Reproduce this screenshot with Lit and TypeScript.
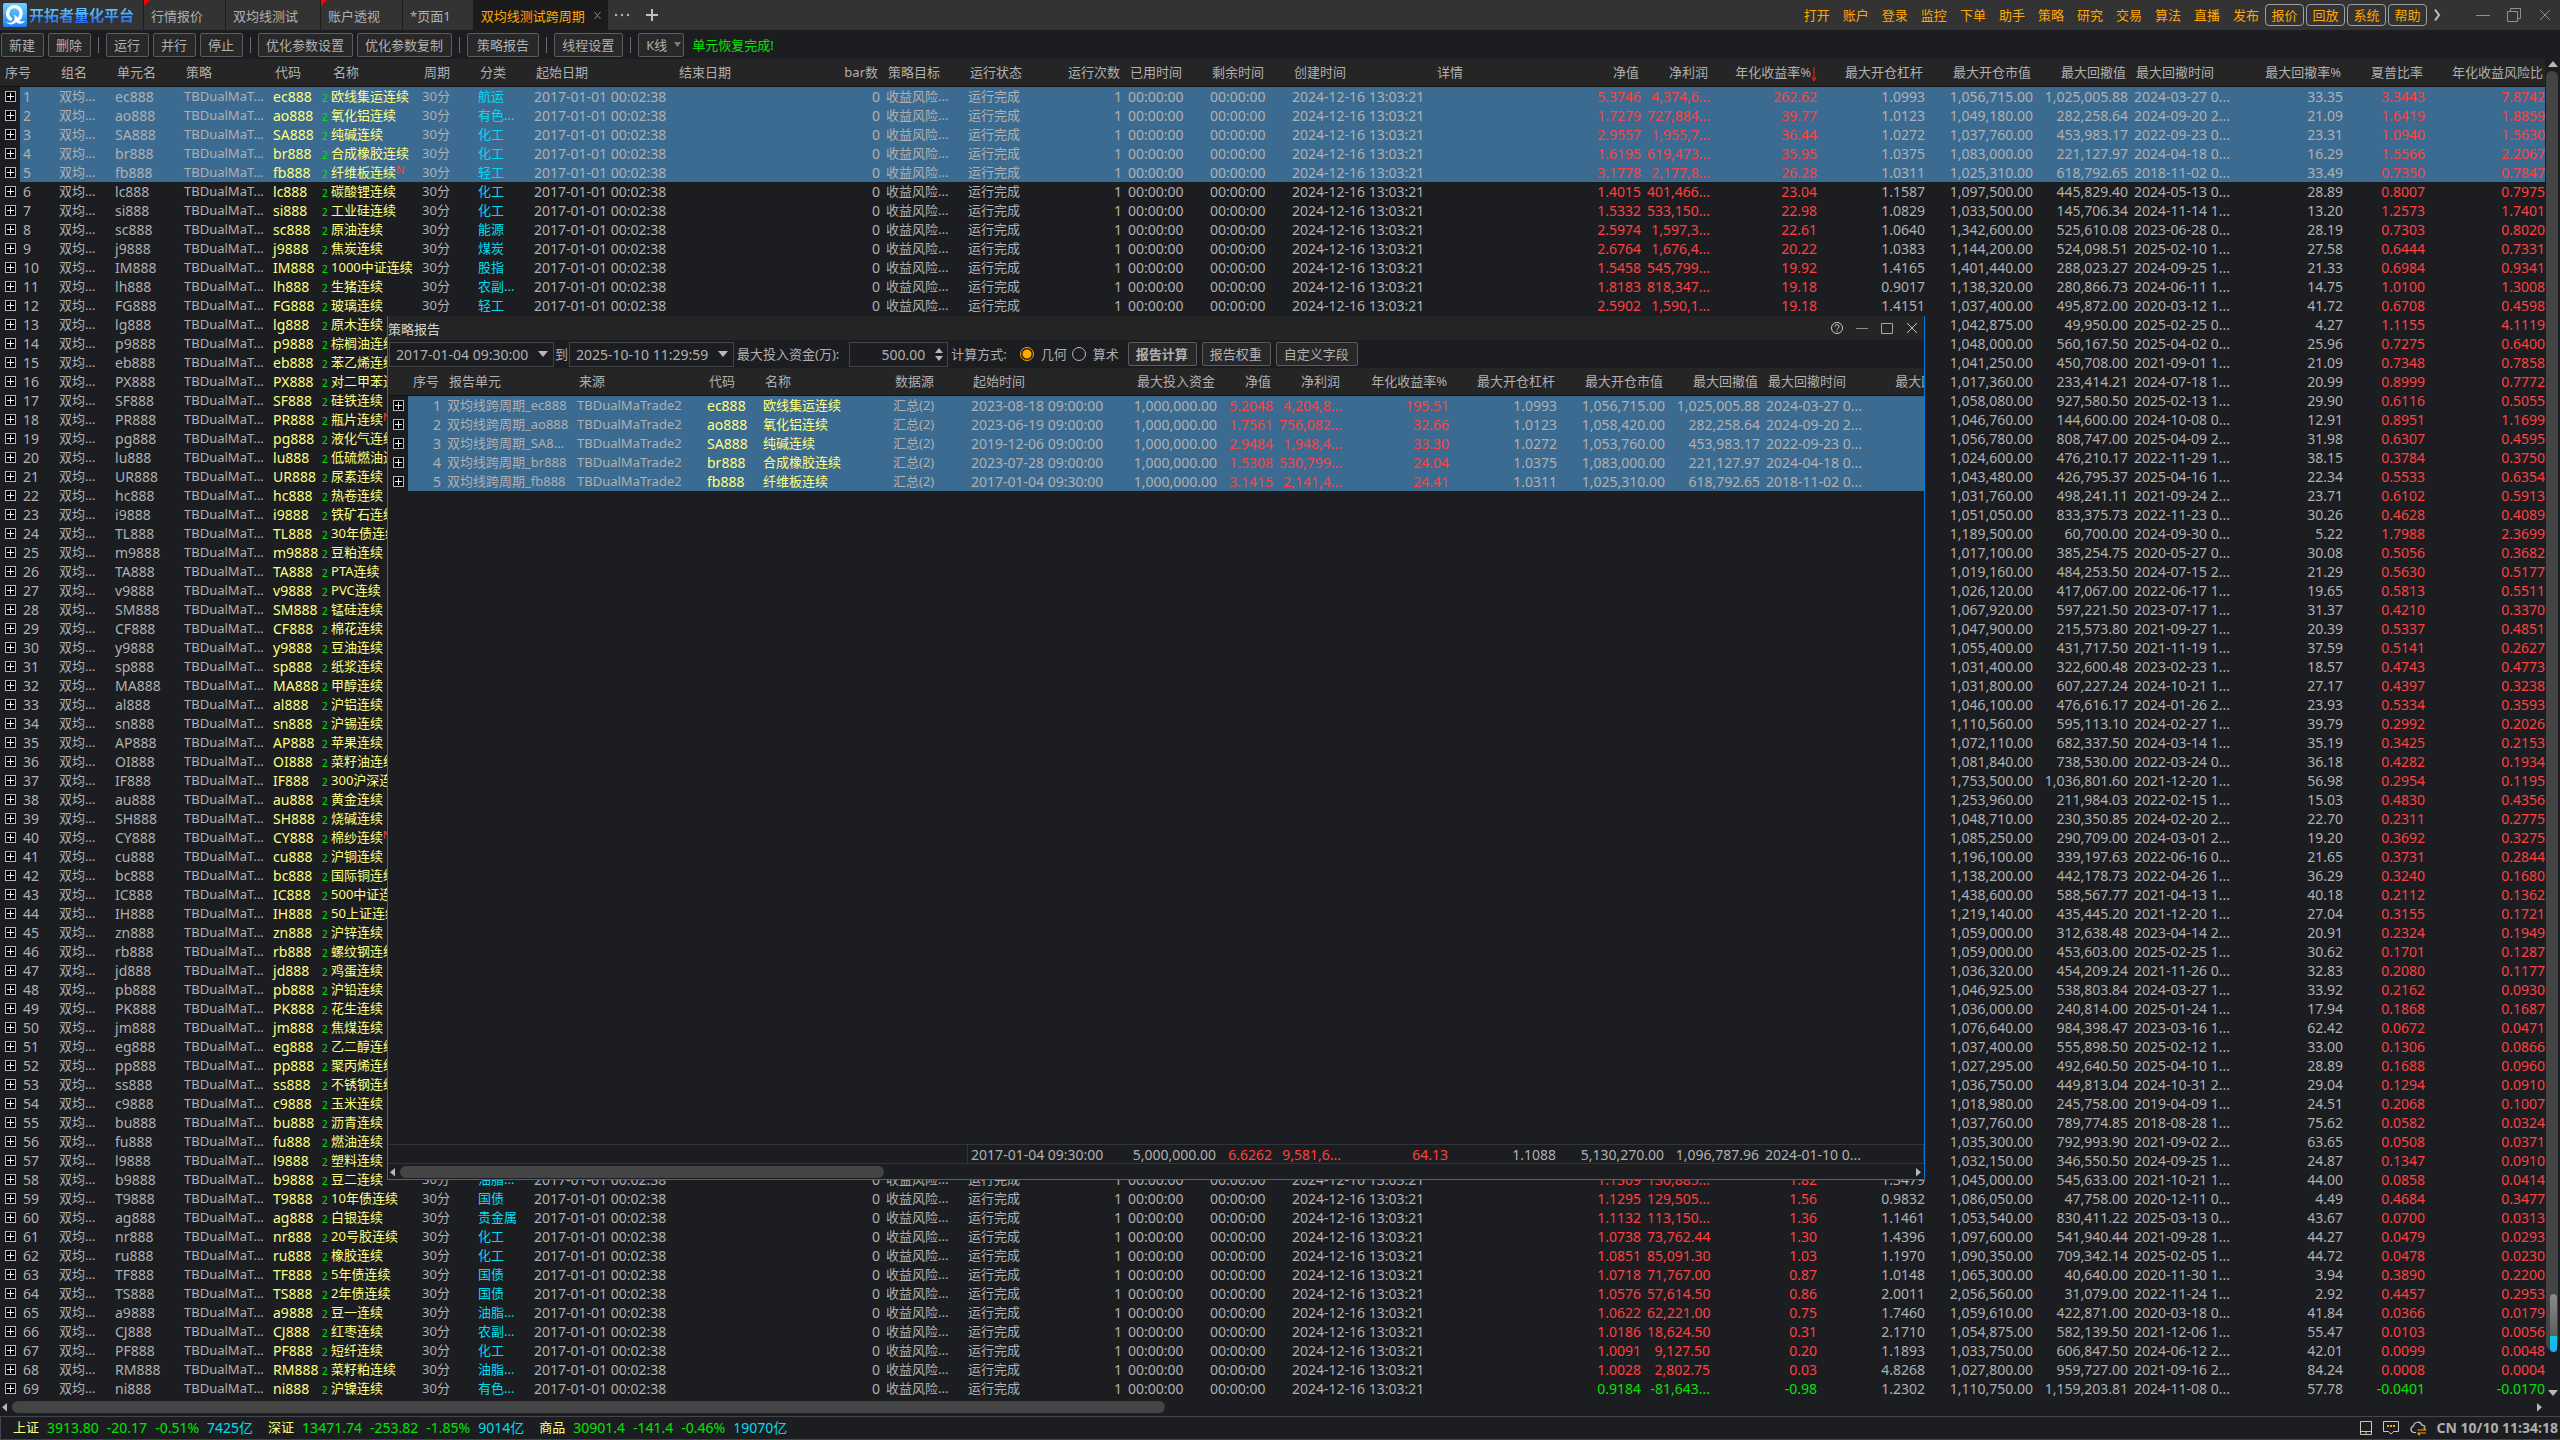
import { LitElement, html, css, svg, nothing } from "lit";
import { customElement, property } from "lit/decorators.js";
import { classMap } from "lit/directives/class-map.js";

interface Column {
  label: string;
  width?: number;
  align?: "right";
  sorted?: boolean;
  span?: number;
}

interface Unit {
  code: string;
  name: string;
  maxValue: string;
  drawdown: string;
  drawdownTime: string;
  drawdownRate: string;
  sharpe: string;
  ratio: string;
  sector?: string;
  nav?: string;
  profit?: string;
  annual?: string;
  leverage?: string;
}

const UNIT_COLUMNS: Column[] = [
  { label: "序号", width: 20, span: 2 },
  { label: "", width: 36, span: 0 },
  { label: "组名", width: 56 },
  { label: "单元名", width: 69 },
  { label: "策略", width: 89 },
  { label: "代码", width: 50 },
  { label: "", width: 8 },
  { label: "名称", width: 91 },
  { label: "周期", width: 56 },
  { label: "分类", width: 56 },
  { label: "起始日期", width: 143 },
  { label: "结束日期", width: 143 },
  { label: "bar数", width: 66, align: "right" },
  { label: "策略目标", width: 82 },
  { label: "运行状态", width: 91 },
  { label: "运行次数", width: 69, align: "right" },
  { label: "已用时间", width: 82 },
  { label: "剩余时间", width: 82 },
  { label: "创建时间", width: 143 },
  { label: "详情" },
  { label: "净值", width: 69, align: "right" },
  { label: "净利润", width: 69, align: "right" },
  { label: "年化收益率%", width: 107, align: "right", sorted: true },
  { label: "最大开仓杠杆", width: 108, align: "right" },
  { label: "最大开仓市值", width: 108, align: "right" },
  { label: "最大回撤值", width: 95, align: "right" },
  { label: "最大回撤时间", width: 109 },
  { label: "最大回撤率%", width: 106, align: "right" },
  { label: "夏普比率", width: 82, align: "right" },
  { label: "年化收益风险比", width: 120, align: "right" },
];

const REPORT_COLUMNS: Column[] = [
  { label: "", width: 20 },
  { label: "序号", width: 36 },
  { label: "报告单元", width: 130 },
  { label: "来源", width: 130 },
  { label: "代码", width: 56 },
  { label: "名称", width: 130 },
  { label: "数据源", width: 78 },
  { label: "起始时间", width: 143 },
  { label: "最大投入资金", align: "right" },
  { label: "净值", width: 56, align: "right" },
  { label: "净利润", width: 69, align: "right" },
  { label: "年化收益率%", width: 107, align: "right" },
  { label: "最大开仓杠杆", width: 108, align: "right" },
  { label: "最大开仓市值", width: 108, align: "right" },
  { label: "最大回撤值", width: 95, align: "right" },
  { label: "最大回撤时间", width: 109 },
  { label: "最大回撤率%", width: 104, align: "right" },
];

const UNITS: Unit[] = `
ec888|欧线集运连续|1,056,715.00|1,025,005.88|2024-03-27 0...|33.35|3.3443|7.8742|航运|5.3746|4,374,6...|262.62|1.0993
ao888|氧化铝连续|1,049,180.00|282,258.64|2024-09-20 2...|21.09|1.6419|1.8859|有色...|1.7279|727,884...|39.77|1.0123
SA888|纯碱连续|1,037,760.00|453,983.17|2022-09-23 0...|23.31|1.0940|1.5630|化工|2.9557|1,955,7...|36.44|1.0272
br888|合成橡胶连续|1,083,000.00|221,127.97|2024-04-18 0...|16.29|1.5566|2.2067|化工|1.6195|619,473...|35.95|1.0375
fb888|纤维板连续N|1,025,310.00|618,792.65|2018-11-02 0...|33.49|0.7350|0.7847|轻工|3.1778|2,177,8...|26.28|1.0311
lc888|碳酸锂连续|1,097,500.00|445,829.40|2024-05-13 0...|28.89|0.8007|0.7975|化工|1.4015|401,466...|23.04|1.1587
si888|工业硅连续|1,033,500.00|145,706.34|2024-11-14 1...|13.20|1.2573|1.7401|化工|1.5332|533,150...|22.98|1.0829
sc888|原油连续|1,342,600.00|525,610.08|2023-06-28 0...|28.19|0.7303|0.8020|能源|2.5974|1,597,3...|22.61|1.0640
j9888|焦炭连续|1,144,200.00|524,098.51|2025-02-10 1...|27.58|0.6444|0.7331|煤炭|2.6764|1,676,4...|20.22|1.0383
IM888|1000中证连续|1,401,440.00|288,023.27|2024-09-25 1...|21.33|0.6984|0.9341|股指|1.5458|545,799...|19.92|1.4165
lh888|生猪连续|1,138,320.00|280,866.73|2024-06-11 1...|14.75|1.0100|1.3008|农副...|1.8183|818,347...|19.18|0.9017
FG888|玻璃连续|1,037,400.00|495,872.00|2020-03-12 1...|41.72|0.6708|0.4598|轻工|2.5902|1,590,1...|19.18|1.4151
lg888|原木连续|1,042,875.00|49,950.00|2025-02-25 0...|4.27|1.1155|4.1119
p9888|棕榈油连续|1,048,000.00|560,167.50|2025-04-02 0...|25.96|0.7275|0.6400
eb888|苯乙烯连续|1,041,250.00|450,708.00|2021-09-01 1...|21.09|0.7348|0.7858
PX888|对二甲苯连续|1,017,360.00|233,414.21|2024-07-18 1...|20.99|0.8999|0.7772
SF888|硅铁连续|1,058,080.00|927,580.50|2025-02-13 1...|29.90|0.6116|0.5055
PR888|瓶片连续N|1,046,760.00|144,600.00|2024-10-08 0...|12.91|0.8951|1.1699
pg888|液化气连续|1,056,780.00|808,747.00|2025-04-09 2...|31.98|0.6307|0.4595
lu888|低硫燃油连续|1,024,600.00|476,210.17|2022-11-29 1...|38.15|0.3784|0.3750
UR888|尿素连续|1,043,480.00|426,795.37|2025-04-16 1...|22.34|0.5533|0.6354
hc888|热卷连续|1,031,760.00|498,241.11|2021-09-24 2...|23.71|0.6102|0.5913
i9888|铁矿石连续|1,051,050.00|833,375.73|2022-11-23 0...|30.26|0.4628|0.4089
TL888|30年债连续|1,189,500.00|60,700.00|2024-09-30 0...|5.22|1.7988|2.3699
m9888|豆粕连续|1,017,100.00|385,254.75|2020-05-27 0...|30.08|0.5056|0.3682
TA888|PTA连续|1,019,160.00|484,253.50|2024-07-15 2...|21.29|0.5630|0.5177
v9888|PVC连续|1,026,120.00|417,067.00|2022-06-17 1...|19.65|0.5813|0.5511
SM888|锰硅连续|1,067,920.00|597,221.50|2023-07-17 1...|31.37|0.4210|0.3370
CF888|棉花连续|1,047,900.00|215,573.80|2021-09-27 1...|20.39|0.5337|0.4851
y9888|豆油连续|1,055,400.00|431,717.50|2021-11-19 1...|37.59|0.5141|0.2627
sp888|纸浆连续|1,031,400.00|322,600.48|2023-02-23 1...|18.57|0.4743|0.4773
MA888|甲醇连续|1,031,800.00|607,227.24|2024-10-21 1...|27.17|0.4397|0.3238
al888|沪铝连续|1,046,100.00|476,616.17|2024-01-26 2...|23.93|0.5334|0.3593
sn888|沪锡连续|1,110,560.00|595,113.10|2024-02-27 1...|39.79|0.2992|0.2026
AP888|苹果连续|1,072,110.00|682,337.50|2024-03-14 1...|35.19|0.3425|0.2153
OI888|菜籽油连续|1,081,840.00|738,530.00|2022-03-24 0...|36.18|0.4282|0.1934
IF888|300沪深连续|1,753,500.00|1,036,801.60|2021-12-20 1...|56.98|0.2954|0.1195
au888|黄金连续|1,253,960.00|211,984.03|2022-02-15 1...|15.03|0.4830|0.4356
SH888|烧碱连续|1,048,710.00|230,350.85|2024-02-20 2...|22.70|0.2311|0.2775
CY888|棉纱连续N|1,085,250.00|290,709.00|2024-03-01 2...|19.20|0.3692|0.3275
cu888|沪铜连续|1,196,100.00|339,197.63|2022-06-16 0...|21.65|0.3731|0.2844
bc888|国际铜连续|1,138,200.00|442,178.73|2022-04-26 1...|36.29|0.3240|0.1680
IC888|500中证连续|1,438,600.00|588,567.77|2021-04-13 1...|40.18|0.2112|0.1362
IH888|50上证连续|1,219,140.00|435,445.20|2021-12-20 1...|27.04|0.3155|0.1721
zn888|沪锌连续|1,059,000.00|312,638.48|2023-04-14 2...|20.91|0.2324|0.1949
rb888|螺纹钢连续|1,059,000.00|453,603.00|2025-02-25 1...|30.62|0.1701|0.1287
jd888|鸡蛋连续|1,036,320.00|454,209.24|2021-11-26 0...|32.83|0.2080|0.1177
pb888|沪铅连续|1,046,925.00|538,803.84|2024-03-27 1...|33.92|0.2162|0.0930
PK888|花生连续|1,036,000.00|240,814.00|2025-01-24 1...|17.94|0.1868|0.1687
jm888|焦煤连续|1,076,640.00|984,398.47|2023-03-16 1...|62.42|0.0672|0.0471
eg888|乙二醇连续|1,037,400.00|555,898.50|2025-02-12 1...|33.00|0.1306|0.0866
pp888|聚丙烯连续|1,027,295.00|492,640.50|2025-04-10 1...|28.89|0.1688|0.0960
ss888|不锈钢连续|1,036,750.00|449,813.04|2024-10-31 2...|29.04|0.1294|0.0910
c9888|玉米连续|1,018,980.00|245,758.00|2019-04-09 1...|24.51|0.2068|0.1007
bu888|沥青连续|1,037,760.00|789,774.85|2018-08-28 1...|75.62|0.0582|0.0324
fu888|燃油连续|1,035,300.00|792,993.90|2021-09-02 2...|63.65|0.0508|0.0371
l9888|塑料连续|1,032,150.00|346,550.50|2024-09-25 1...|24.87|0.1347|0.0910
b9888|豆二连续|1,045,000.00|545,633.00|2021-10-21 1...|44.00|0.0858|0.0414|油脂...|1.1309|130,885...|1.82|1.3479
T9888|10年债连续|1,086,050.00|47,758.00|2020-12-11 0...|4.49|0.4684|0.3477|国债|1.1295|129,505...|1.56|0.9832
ag888|白银连续|1,053,540.00|830,411.22|2025-03-13 0...|43.67|0.0700|0.0313|贵金属|1.1132|113,150...|1.36|1.1461
nr888|20号胶连续|1,097,600.00|541,940.44|2021-09-28 1...|44.27|0.0479|0.0293|化工|1.0738|73,762.44|1.30|1.4396
ru888|橡胶连续|1,090,350.00|709,342.14|2025-02-05 1...|44.72|0.0478|0.0230|化工|1.0851|85,091.30|1.03|1.1970
TF888|5年债连续|1,065,300.00|40,640.00|2020-11-30 1...|3.94|0.3890|0.2200|国债|1.0718|71,767.00|0.87|1.0148
TS888|2年债连续|2,056,560.00|31,079.00|2022-11-24 1...|2.92|0.4457|0.2953|国债|1.0576|57,614.50|0.86|2.0011
a9888|豆一连续|1,059,610.00|422,871.00|2020-03-18 0...|41.84|0.0366|0.0179|油脂...|1.0622|62,221.00|0.75|1.7460
CJ888|红枣连续|1,054,875.00|582,139.50|2021-12-06 1...|55.47|0.0103|0.0056|农副...|1.0186|18,624.50|0.31|2.1710
PF888|短纤连续|1,033,750.00|606,847.50|2024-06-12 2...|42.01|0.0099|0.0048|化工|1.0091|9,127.50|0.20|1.1893
RM888|菜籽粕连续|1,027,800.00|959,727.00|2021-09-16 2...|84.24|0.0008|0.0004|油脂...|1.0028|2,802.75|0.03|4.8268
ni888|沪镍连续|1,110,750.00|1,159,203.81|2024-11-08 0...|57.78|-0.0401|-0.0170|有色...|0.9184|-81,643...|-0.98|1.2302
`
  .trim()
  .split("\n")
  .map((line) => {
    const [
      code, name, maxValue, drawdown, drawdownTime, drawdownRate, sharpe, ratio,
      sector, nav, profit, annual, leverage,
    ] = line.split("|");
    return {
      code, name, maxValue, drawdown, drawdownTime, drawdownRate, sharpe, ratio,
      sector, nav, profit, annual, leverage,
    };
  });

const REPORT_ROWS: string[][] = `
双均线跨周期_ec888|ec888|欧线集运连续|2023-08-18 09:00:00|5.2048|4,204,8...|195.51|1.0993|1,056,715.00|1,025,005.88|2024-03-27 0...
双均线跨周期_ao888|ao888|氧化铝连续|2023-06-19 09:00:00|1.7561|756,082...|32.66|1.0123|1,058,420.00|282,258.64|2024-09-20 2...
双均线跨周期_SA8...|SA888|纯碱连续|2019-12-06 09:00:00|2.9484|1,948,4...|33.30|1.0272|1,053,760.00|453,983.17|2022-09-23 0...
双均线跨周期_br888|br888|合成橡胶连续|2023-07-28 09:00:00|1.5308|530,799...|24.04|1.0375|1,083,000.00|221,127.97|2024-04-18 0...
双均线跨周期_fb888|fb888|纤维板连续|2017-01-04 09:30:00|3.1415|2,141,4...|24.41|1.0311|1,025,310.00|618,792.65|2018-11-02 0...
`
  .trim()
  .split("\n")
  .map((line) => line.split("|"));

const MENU = ["打开", "账户", "登录", "监控", "下单", "助手", "策略", "研究", "交易", "算法", "直播", "发布"];
const QUICK = ["报价", "回放", "系统", "帮助"];

const INDICES = [
  ["上证", "3913.80", "-20.17", "-0.51%", "7425亿"],
  ["深证", "13471.74", "-253.82", "-1.85%", "9014亿"],
  ["商品", "30901.4", "-141.4", "-0.46%", "19070亿"],
];

const expander = () => html`<button class="expander" aria-label="展开">
  <svg viewBox="0 0 11 11" width="11" height="11" shape-rendering="crispEdges">
    <rect x="0.5" y="0.5" width="10" height="10" fill="#000" stroke="#b8b8b8" />
    <path d="M2 5.5h7M5.5 2v7" stroke="#f0f0f0" />
  </svg>
</button>`;

const colgroup = (columns: Column[]) => html`<colgroup>
  ${columns.map((c) => (c.width ? html`<col style="width:${c.width}px" />` : html`<col />`))}
</colgroup>`;

const headRow = (columns: Column[]) => html`<thead>
  <tr>
    ${columns.map((c) =>
      c.span === 0
        ? nothing
        : html`<th
            scope="col"
            colspan=${c.span ?? 1}
            class=${classMap({ right: c.align === "right", sorted: !!c.sorted })}
          >${c.label}${c.sorted
              ? html`<svg class="sort" viewBox="0 0 6 16" width="6" height="16">
                  <path d="M3 1v13M1 11l2 4 2-4" fill="none" stroke="#ff2020" />
                </svg>`
              : nothing}</th>`,
    )}
  </tr>
</thead>`;

const arrow = (direction: "left" | "right" | "up" | "down") => {
  const shapes = {
    left: "M7 0v12L2 6z",
    right: "M3 0v12L8 6z",
    up: "M0 8h10L5 2z",
    down: "M0 2h10L5 8z",
  };
  const wide = direction === "up" || direction === "down";
  return html`<svg class="arrow" width="10" height=${wide ? 10 : 12} viewBox="0 0 10 ${wide ? 10 : 12}">
    ${svg`<path d=${shapes[direction]} fill="#b8b8b8" transform=${wide ? "" : "translate(0 2) scale(1 .7)"} />`}
  </svg>`;
};

const shared = css`
  :host {
    display: block;
    --bg: #1c1d21;
    --band: #252525;
    --select: #3c6b92;
    --text: #b0b0b0;
    --line: #3c3d41;
    --yellow: #ffff80;
    --cyan: #00dcf0;
    --red: #ff4040;
    --green: #00e400;
    --orange: #ffa800;
    color: var(--text);
    font: 13px/19px "Noto Sans", "Noto Sans CJK SC", sans-serif;
  }
  * {
    box-sizing: border-box;
  }
  button,
  input,
  select {
    font: inherit;
    color: inherit;
    margin: 0;
    padding: 0;
    border: 0;
    background: none;
    outline: none;
  }
  svg {
    display: block;
    flex: none;
  }
  table {
    table-layout: fixed;
    border-collapse: separate;
    border-spacing: 0;
  }
  th,
  td {
    height: 19px;
    padding: 0 3px;
    overflow: hidden;
    white-space: nowrap;
    text-align: left;
    font-weight: 400;
    vertical-align: middle;
  }
  th {
    height: 28px;
    padding: 0 5px 1px;
    background: var(--band);
    box-shadow: inset 0 -1px #141416;
  }
  .right {
    text-align: right;
  }
  th.sorted {
    padding-right: 3px;
  }
  .sort {
    display: inline-block;
    vertical-align: middle;
  }
  .num {
    font-size: 14px;
  }
  .selected td {
    background: var(--select);
  }
  .selected td.tree {
    background: none;
  }
  td.tree {
    padding: 0 0 0 5px;
  }
  .expander {
    display: block;
    width: 11px;
    height: 11px;
  }
  .yellow {
    color: var(--yellow);
  }
  .cyan {
    color: var(--cyan);
  }
  .red {
    color: var(--red);
  }
  .green {
    color: var(--green);
  }
  .btn {
    height: 24px;
    padding: 0 8px 0 7px;
    border: 1px solid #5c5c5c;
    border-radius: 2px;
    background: #282829;
    line-height: 22px;
    white-space: nowrap;
  }
  .hscroll {
    display: flex;
    align-items: center;
    gap: 2px;
  }
  .hscroll .track {
    flex: 1;
  }
  .thumb {
    height: 12px;
    border-radius: 6px;
    background: #444444;
  }
`;

@customElement("report-window")
export class ReportWindow extends LitElement {
  static styles = [
    shared,
    css`
      .window {
        display: flex;
        flex-direction: column;
        height: 100%;
        border: 1px solid #0078d4;
        border-top: 0;
        background: var(--bg);
      }
      .title {
        display: flex;
        align-items: center;
        height: 24px;
        padding-right: 5px;
        background: var(--band);
        color: #d8d8d8;
      }
      .title h1 {
        margin: 0 auto 0 0;
        padding-top: 2px;
        font: inherit;
      }
      .controls {
        display: flex;
        gap: 11px;
      }
      .tools {
        display: flex;
        align-items: center;
        height: 28px;
        padding-left: 1px;
      }
      .combo,
      .spin {
        display: flex;
        align-items: center;
        height: 25px;
        border: 1px solid #444548;
      }
      .combo {
        width: 165px;
        padding: 0 5px 0 6px;
      }
      .spin {
        width: 99px;
        padding: 0 4px;
      }
      .combo input,
      .spin input {
        flex: 1;
        min-width: 0;
        font-size: 14px;
      }
      .spin input {
        text-align: right;
        padding-right: 10px;
      }
      .steps {
        display: grid;
        gap: 3px;
      }
      .to {
        padding: 0 1px;
      }
      .capital {
        padding: 0 10px 0 3px;
      }
      .method {
        padding: 0 13px 0 3px;
      }
      .choice {
        display: flex;
        align-items: center;
        gap: 7px;
        margin-right: 5px;
      }
      .choice input {
        appearance: none;
        width: 14px;
        height: 14px;
        border: 1px solid #b8b8b8;
        border-radius: 50%;
      }
      .choice input:checked {
        border-color: var(--orange);
        background: radial-gradient(circle, var(--orange) 0 4px, transparent 5px);
      }
      .actions {
        display: flex;
        gap: 5px;
        margin-left: 4px;
      }
      .strong {
        font-weight: 600;
      }
      .sheet {
        flex: 1;
        overflow: hidden;
      }
      table {
        width: calc(100% + 52px);
      }
      .total {
        overflow: hidden;
        border: 1px solid #34353a;
        border-width: 1px 1px 1px 0;
      }
      .total td {
        height: 18px;
        padding-top: 1px;
        line-height: 17px;
      }
      .total .first {
        box-shadow: inset -1px 0 #34353a;
      }
      .hscroll {
        height: 15px;
        padding: 0 1px 0 0;
      }
      .thumb {
        width: 32%;
      }
    `,
  ];

  render() {
    return html`<section class="window" aria-label="策略报告">
      <header class="title">
        <h1>策略报告</h1>
        <div class="controls">
          <button aria-label="帮助">
            <svg width="14" height="14" viewBox="0 0 14 14" fill="none" stroke="#c8c8c8">
              <circle cx="7" cy="7" r="5.5" />
              <path d="M5 5.6a2 2 0 1 1 2.6 1.9q-.6.3-.6 1.2M7 9.6v1.2" />
            </svg>
          </button>
          <button aria-label="最小化">
            <svg width="14" height="14" viewBox="0 0 14 14"><path d="M1 7.5h12" stroke="#8c8c8c" /></svg>
          </button>
          <button aria-label="最大化">
            <svg width="14" height="14" viewBox="0 0 14 14"><path d="M1.500 2.500h11v10h-11z" fill="none" stroke="#a8a8a8" /></svg>
          </button>
          <button aria-label="关闭">
            <svg width="14" height="14" viewBox="0 0 14 14"><path d="M2 2l10 10M12 2L2 12" stroke="#c0c0c0" /></svg>
          </button>
        </div>
      </header>
      <div class="tools">
        <div class="combo">
          <input id="from" type="text" value="2017-01-04 09:30:00" aria-label="起始时间" />
          <button aria-label="选择起始时间">${arrow("down")}</button>
        </div>
        <label class="to" for="to">到</label>
        <div class="combo">
          <input id="to" type="text" value="2025-10-10 11:29:59" />
          <button aria-label="选择结束时间">${arrow("down")}</button>
        </div>
        <label class="capital" for="capital">最大投入资金(万):</label>
        <div class="spin">
          <input id="capital" type="text" inputmode="decimal" value="500.00" />
          <div class="steps">
            <button aria-label="增加"><svg width="8" height="5" viewBox="0 0 8 5"><path d="M0 5h8L4 0z" fill="#b8b8b8" /></svg></button>
            <button aria-label="减少"><svg width="8" height="5" viewBox="0 0 8 5"><path d="M0 0h8L4 5z" fill="#b8b8b8" /></svg></button>
          </div>
        </div>
        <span class="method">计算方式:</span>
        <label class="choice"><input type="radio" name="method" checked />几何</label>
        <label class="choice"><input type="radio" name="method" />算术</label>
        <div class="actions">
          <button class="btn strong">报告计算</button>
          <button class="btn">报告权重</button>
          <button class="btn">自定义字段</button>
        </div>
      </div>
      <div class="sheet">
        <table>
          ${colgroup(REPORT_COLUMNS)} ${headRow(REPORT_COLUMNS)}
          <tbody>
            ${REPORT_ROWS.map(
              ([unit, code, name, start, nav, profit, annual, leverage, value, drawdown, time], i) => html`<tr class="selected">
                <td class="tree">${expander()}</td>
                <td class="num right">${i + 1}</td>
                <td>${unit}</td>
                <td>TBDualMaTrade2</td>
                <td class="num yellow">${code}</td>
                <td class="yellow">${name}</td>
                <td>汇总(2)</td>
                <td class="num">${start}</td>
                <td class="num right">1,000,000.00</td>
                <td class="num right red">${nav}</td>
                <td class="num right red">${profit}</td>
                <td class="num right red">${annual}</td>
                <td class="num right">${leverage}</td>
                <td class="num right">${value}</td>
                <td class="num right">${drawdown}</td>
                <td class="num">${time}</td>
                <td></td>
              </tr>`,
            )}
          </tbody>
        </table>
      </div>
      <div class="total">
        <table>
          ${colgroup(REPORT_COLUMNS)}
          <tbody>
            <tr>
              <td class="first" colspan="7"></td>
              <td class="num">2017-01-04 09:30:00</td>
              <td class="num right">5,000,000.00</td>
              <td class="num right red">6.6262</td>
              <td class="num right red">9,581,6...</td>
              <td class="num right red">64.13</td>
              <td class="num right">1.1088</td>
              <td class="num right">5,130,270.00</td>
              <td class="num right">1,096,787.96</td>
              <td class="num">2024-01-10 0...</td>
              <td></td>
            </tr>
          </tbody>
        </table>
      </div>
      <div class="hscroll">
        ${arrow("left")}
        <div class="track"><div class="thumb"></div></div>
        ${arrow("right")}
      </div>
    </section>`;
  }
}

@customElement("unit-table")
export class UnitTable extends LitElement {
  @property({ attribute: false }) units: Unit[] = [];

  static styles = [
    shared,
    css`
      :host {
        overflow: hidden;
      }
      table {
        width: calc(100% + 3px);
      }
      td.mark {
        padding: 3px 0 0 2px;
        font-size: 10px;
        line-height: 16px;
        color: #00e400;
      }
      .name {
        overflow: visible;
      }
      .new {
        font-size: 11px;
        line-height: 10px;
        vertical-align: 3px;
        color: var(--red);
      }
    `,
  ];

  private row(unit: Unit, index: number) {
    const shown = unit.sector !== undefined;
    const fresh = unit.name.endsWith("N");
    const name = fresh ? unit.name.slice(0, -1) : unit.name;
    const tone = (v: string) => (v.startsWith("-") ? "num right green" : "num right red");
    const result = tone(unit.annual ?? "");
    return html`<tr class=${index < 5 ? "selected" : ""}>
      <td class="tree">${expander()}</td>
      <td class="num">${index + 1}</td>
      <td>双均...</td>
      <td class="num">${unit.code}</td>
      <td>TBDualMaT...</td>
      <td class="num yellow">${unit.code}</td>
      <td class="mark">2</td>
      <td class="name yellow">${name}${fresh ? html`<span class="new">N</span>` : nothing}</td>
      ${shown
        ? html`<td>30分</td>
            <td class="cyan">${unit.sector}</td>
            <td class="num">2017-01-01 00:02:38</td>
            <td></td>
            <td class="num right">0</td>
            <td>收益风险...</td>
            <td>运行完成</td>
            <td class="num right">1</td>
            <td class="num">00:00:00</td>
            <td class="num">00:00:00</td>
            <td class="num">2024-12-16 13:03:21</td>
            <td></td>
            <td class=${result}>${unit.nav}</td>
            <td class=${result}>${unit.profit}</td>
            <td class=${result}>${unit.annual}</td>
            <td class="num right">${unit.leverage}</td>`
        : html`<td colspan="16"></td>`}
      <td class="num right">${unit.maxValue}</td>
      <td class="num right">${unit.drawdown}</td>
      <td class="num">${unit.drawdownTime}</td>
      <td class="num right">${unit.drawdownRate}</td>
      <td class=${tone(unit.sharpe)}>${unit.sharpe}</td>
      <td class=${tone(unit.ratio)}>${unit.ratio}</td>
    </tr>`;
  }

  render() {
    return html`<table>
      ${colgroup(UNIT_COLUMNS)} ${headRow(UNIT_COLUMNS)}
      <tbody>
        ${this.units.map((u, i) => this.row(u, i))}
      </tbody>
    </table>`;
  }
}

@customElement("app-root")
export class AppRoot extends LitElement {
  static styles = [
    shared,
    css`
      .app {
        display: flex;
        flex-direction: column;
        min-height: 100vh;
        background: var(--bg);
        position: relative;
        overflow: hidden;
      }
      .titlebar {
        display: flex;
        align-items: stretch;
        height: 30px;
        padding-right: 8px;
        background: #333333;
      }
      .brand {
        display: flex;
        align-items: center;
        gap: 2px;
        width: 143px;
        padding-left: 3px;
        white-space: nowrap;
      }
      .brand span {
        font-size: 15px;
        font-weight: 600;
        background: linear-gradient(#5cc4ff 20%, #2a6cf0 85%);
        background-clip: text;
        color: transparent;
      }
      .tab {
        display: flex;
        align-items: center;
        position: relative;
        padding: 2px 22px 0 7px;
        border-left: 1px solid #1c1c1c;
        white-space: nowrap;
      }
      .tab.active {
        gap: 6px;
        padding-right: 4px;
        background: #1b1b1c;
        color: var(--orange);
      }
      .flag {
        position: absolute;
        left: 0;
        top: 0;
      }
      .tabtools {
        display: flex;
        align-items: center;
        gap: 15px;
        padding-left: 5px;
      }
      .menu {
        display: flex;
        align-items: center;
        gap: 13px;
        margin-left: auto;
        padding-top: 1px;
        white-space: nowrap;
      }
      .menu a {
        color: var(--orange);
        text-decoration: none;
      }
      .quick {
        display: flex;
        align-items: center;
        gap: 2px;
        padding-left: 6px;
      }
      .quick button {
        width: 39px;
        height: 22px;
        border: 1px solid #a0a0a0;
        border-radius: 4px;
        color: var(--orange);
        line-height: 20px;
      }
      .more {
        padding: 0 32px 0 3px;
      }
      .controls {
        display: flex;
        align-items: center;
        gap: 17px;
      }
      .toolbar {
        display: flex;
        align-items: center;
        gap: 4px;
        height: 29px;
        padding: 1px 0 0 1px;
      }
      .rule {
        width: 1px;
        height: 16px;
        margin: 0 3px;
        background: #6c6c6c;
      }
      .wide {
        padding: 0 9px;
      }
      .pick {
        display: flex;
        align-items: center;
        width: 46px;
        padding: 0 2px 0 7px;
      }
      .pick select {
        flex: 1;
        min-width: 0;
        appearance: none;
      }
      .done {
        padding-left: 4px;
        color: var(--green);
      }
      .body {
        display: flex;
        flex: 1;
      }
      .body unit-table {
        flex: 1;
        min-width: 0;
      }
      .vscroll {
        display: flex;
        flex-direction: column;
        align-items: center;
        gap: 2px;
        position: relative;
        width: 15px;
        padding: 0 1px 0 0;
      }
      .vscroll .arrow {
        margin-left: 1px;
      }
      .vtrack {
        width: 12px;
        flex: 1;
        margin-bottom: 36px;
        border-radius: 6px;
        background: #444444;
      }
      .meter {
        position: absolute;
        right: 3px;
        bottom: 46px;
        width: 7px;
        height: 58px;
        border-radius: 4px;
        background: linear-gradient(#8c8c8c, #5c5c5c 42px, #10c8d8 42px, #20a8ff);
      }
      .mainscroll {
        height: 18px;
        padding-right: 16px;
      }
      .mainscroll .thumb {
        width: calc(46% - 6px);
      }
      .status {
        display: flex;
        align-items: center;
        height: 24px;
        padding: 0 2px 1px 12px;
        border: 1px solid #44454a;
        border-width: 1px 0 1px 1px;
        white-space: nowrap;
      }
      .index {
        display: flex;
        gap: 8px;
        margin-right: 15px;
      }
      .index .amount {
        font-size: 14px;
      }
      .tray {
        display: flex;
        align-items: center;
        gap: 10px;
        margin-left: auto;
      }
      .clock {
        font-size: 14px;
        font-weight: 700;
      }
      .floating {
        position: absolute;
        left: 387px;
        top: 316px;
        width: 1538px;
        height: 864px;
      }
    `,
  ];

  private flag() {
    return html`<svg class="flag" width="6" height="6" viewBox="0 0 6 6"><path d="M0 0h6L0 6z" fill="#ff0000" /></svg>`;
  }

  render() {
    return html`<div class="app">
      <header class="titlebar">
        <div class="brand">
          <svg width="24" height="24" viewBox="0 0 24 24">
            <defs>
              <linearGradient id="logo" x1="0" y1="0" x2="0" y2="1">
                <stop offset="0" stop-color="#6cd4ff" />
                <stop offset="1" stop-color="#1f80f4" />
              </linearGradient>
            </defs>
            <rect width="24" height="24" rx="2" fill="url(#logo)" />
            <path
              d="M7.500 16C5.300 14.500 4.300 12 4.800 9.300 5.400 6 8.200 3.600 11.400 3.600c3.800 0 6.700 3 6.700 6.700 0 2.100-.6 3.700-1.600 5"
              fill="none" stroke="#fff" stroke-width="3.400" stroke-linecap="round"
            />
            <path d="M2.500 18.500c2.500 2 6.200 1.600 8-.4 1.500-1.700 1.600-4 .2-6.300 2.700.8 4.300 2.800 5.100 4.600.9 1.900 3 2.600 6.200 1.600-1.700 3-6.400 3.800-8.900 1.100-2.200 3.100-7.800 3.400-10.600-.6z" fill="#fff" />
          </svg>
          <span>开拓者量化平台</span>
        </div>
        <button class="tab">${this.flag()}行情报价</button>
        <button class="tab">双均线测试</button>
        <button class="tab">${this.flag()}账户透视</button>
        <button class="tab">*页面1</button>
        <div class="tab active">
          <button>双均线测试跨周期</button>
          <button aria-label="关闭标签">
            <svg width="13" height="12" viewBox="0 0 13 12"><path d="M3.500 2l6 7M9.500 2l-6 7" stroke="#8c8c8c" /></svg>
          </button>
        </div>
        <div class="tabtools">
          <button aria-label="更多标签">
            <svg width="17" height="4" viewBox="0 0 17 4" fill="#b8b8b8">
              <circle cx="3" cy="2" r="1.200" /><circle cx="9" cy="2" r="1.200" /><circle cx="15" cy="2" r="1.200" />
            </svg>
          </button>
          <button aria-label="新建标签">
            <svg width="14" height="14" viewBox="0 0 14 14"><path d="M1 7h12M7 1v12" stroke="#c0c0c0" stroke-width="2" /></svg>
          </button>
        </div>
        <nav class="menu">${MENU.map((m) => html`<a href="#">${m}</a>`)}</nav>
        <div class="quick">${QUICK.map((q) => html`<button>${q}</button>`)}</div>
        <button class="more" aria-label="更多">
          <svg width="14" height="14" viewBox="0 0 14 14"><path d="M5 1.500l4 5.500-4 5.500" fill="none" stroke="#c0c0c0" stroke-width="2" /></svg>
        </button>
        <div class="controls">
          <button aria-label="最小化">
            <svg width="14" height="14" viewBox="0 0 14 14"><path d="M0 7.500h14" stroke="#909090" /></svg>
          </button>
          <button aria-label="还原">
            <svg width="14" height="14" viewBox="0 0 14 14">
              <path d="M.5 3.500h10v10H.5zM3.500 3.500v-3h10v10h-3" fill="none" stroke="#909090" />
            </svg>
          </button>
          <button aria-label="关闭">
            <svg width="14" height="14" viewBox="0 0 14 14"><path d="M2 2l10 10M12 2L2 12" stroke="#909090" /></svg>
          </button>
        </div>
      </header>
      <div class="toolbar">
        <button class="btn">新建</button>
        <button class="btn">删除</button>
        <i class="rule"></i>
        <button class="btn">运行</button>
        <button class="btn">并行</button>
        <button class="btn">停止</button>
        <i class="rule"></i>
        <button class="btn">优化参数设置</button>
        <button class="btn">优化参数复制</button>
        <i class="rule"></i>
        <button class="btn wide">策略报告</button>
        <i class="rule"></i>
        <button class="btn">线程设置</button>
        <i class="rule"></i>
        <div class="btn pick">
          <select aria-label="图表类型">
            <option>K线</option>
          </select>
          <svg width="7" height="6" viewBox="0 0 7 6"><path d="M0 0h7L3.500 5z" fill="#7c7c7c" /></svg>
        </div>
        <span class="done">单元恢复完成!</span>
      </div>
      <main class="body">
        <unit-table .units=${UNITS}></unit-table>
        <div class="vscroll">
          ${arrow("up")}
          <div class="vtrack"></div>
          <div class="meter"></div>
          ${arrow("down")}
        </div>
      </main>
      <div class="hscroll mainscroll">
        ${arrow("left")}
        <div class="track"><div class="thumb"></div></div>
        ${arrow("right")}
      </div>
      <footer class="status">
        ${INDICES.map(
          ([label, price, change, rate, amount]) => html`<div class="index">
            <span class="yellow">${label}</span>
            <span class="num green">${price}</span>
            <span class="num green">${change}</span>
            <span class="num green">${rate}</span>
            <span class="amount cyan">${amount}</span>
          </div>`,
        )}
        <div class="tray">
          <svg width="14" height="16" viewBox="0 0 14 16" fill="none">
            <path d="M1.500 1.500h11v13h-11zM1.500 11.500h11" stroke="#c8c8c8" />
            <path d="M6 13h2" stroke="#ffa800" />
          </svg>
          <svg width="17" height="16" viewBox="0 0 17 16" fill="none">
            <path d="M.5 1.500h15v10h-5l-2.500 2.500-2.500-2.500h-5z" stroke="#c8c8c8" />
            <path d="M4 6h2M7 6h2M10 6h2" stroke="#ffa800" stroke-width="2" />
          </svg>
          <svg width="17" height="16" viewBox="0 0 17 16" fill="none">
            <path d="M6 12.500H4a3.300 3.300 0 0 1-.4-6.500A4.200 4.200 0 0 1 11.800 5.200a3.200 3.200 0 0 1 3.400 2.300" stroke="#c8c8c8" stroke-width="1.200" />
            <path d="M7.500 10h8.500M13.500 7.800l2.500 2.200M7.500 13H16M10 15.200L7.500 13" stroke="#ffa800" stroke-width="1.200" />
          </svg>
          <span class="clock">CN 10/10 11:34:18</span>
        </div>
      </footer>
      <report-window class="floating"></report-window>
    </div>`;
  }
}
